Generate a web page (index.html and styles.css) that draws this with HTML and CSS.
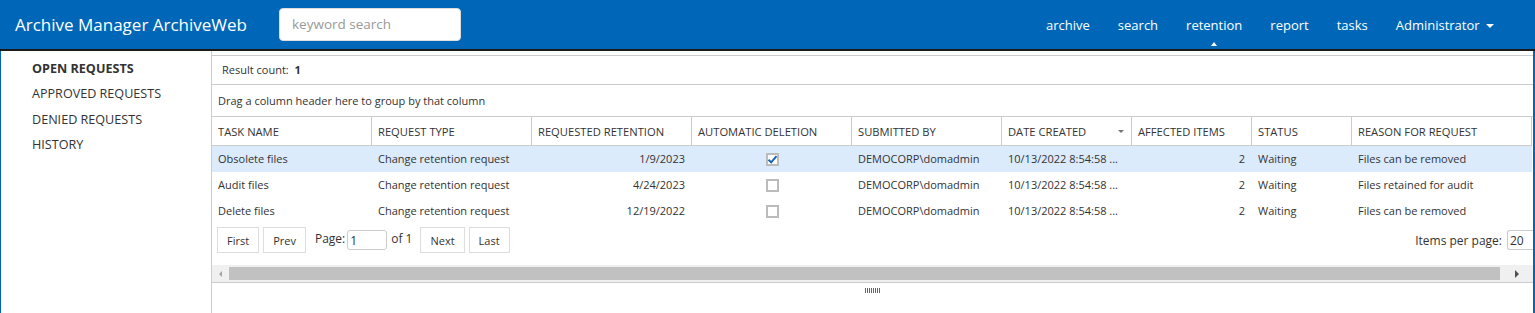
FILE: index.html
```html
<!DOCTYPE HTML>
<html>
<head>
  <title>Archive Manager ArchiveWeb</title>
  <meta name="viewport" content="width=device-width, initial-scale=1">
  <link rel="stylesheet" href="styles.css">
</head>
<body>

<div class="topbar">
  <div class="brand">Archive Manager ArchiveWeb</div>
  <input class="search" type="text" placeholder="keyword search">
  <div class="nav">
    <a href="#">archive</a>
    <a href="#">search</a>
    <a href="#" class="active">retention</a>
    <a href="#">report</a>
    <a href="#">tasks</a>
    <a href="#">Administrator <span class="caret"></span></a>
  </div>
</div>

<div class="page">
  <div class="side">
    <a href="#" class="current">OPEN REQUESTS</a>
    <a href="#">APPROVED REQUESTS</a>
    <a href="#">DENIED REQUESTS</a>
    <a href="#">HISTORY</a>
  </div>

  <div class="main">
    <div class="grid">
      <div class="count">Result count: <b>1</b></div>
      <div class="group">Drag a column header here to group by that column</div>
      <table class="tbl">
        <colgroup>
          <col style="width:160px"><col style="width:160px"><col style="width:160px">
          <col style="width:160px"><col style="width:150px"><col style="width:130px">
          <col style="width:120px"><col style="width:100px"><col style="width:180px">
        </colgroup>
        <tr>
          <th>TASK NAME</th>
          <th>REQUEST TYPE</th>
          <th>REQUESTED RETENTION</th>
          <th>AUTOMATIC DELETION</th>
          <th>SUBMITTED BY</th>
          <th class="sorted">DATE CREATED <span class="sort"></span></th>
          <th>AFFECTED ITEMS</th>
          <th>STATUS</th>
          <th>REASON FOR REQUEST</th>
        </tr>
        <tr class="selected">
          <td>Obsolete files</td>
          <td>Change retention request</td>
          <td class="num">1/9/2023</td>
          <td class="chk"><span class="box on"><svg width="11" height="11" viewBox="0 0 11 11"><path d="M1.5 5.8 L4.2 8.4 L9.5 2.2" fill="none" stroke="#1b62b0" stroke-width="2"/></svg></span></td>
          <td>DEMOCORP\domadmin</td>
          <td>10/13/2022 8:54:58 ...</td>
          <td class="num">2</td>
          <td>Waiting</td>
          <td>Files can be removed</td>
        </tr>
        <tr>
          <td>Audit files</td>
          <td>Change retention request</td>
          <td class="num">4/24/2023</td>
          <td class="chk"><span class="box"></span></td>
          <td>DEMOCORP\domadmin</td>
          <td>10/13/2022 8:54:58 ...</td>
          <td class="num">2</td>
          <td>Waiting</td>
          <td>Files retained for audit</td>
        </tr>
        <tr>
          <td>Delete files</td>
          <td>Change retention request</td>
          <td class="num">12/19/2022</td>
          <td class="chk"><span class="box"></span></td>
          <td>DEMOCORP\domadmin</td>
          <td>10/13/2022 8:54:58 ...</td>
          <td class="num">2</td>
          <td>Waiting</td>
          <td>Files can be removed</td>
        </tr>
      </table>

      <div class="pager">
        <button class="pbtn">First</button>
        <button class="pbtn">Prev</button>
        <span class="plabel">Page:</span>
        <input class="pinput" type="text" value="1">
        <span class="plabel">of 1</span>
        <button class="pbtn">Next</button>
        <button class="pbtn">Last</button>
        <span class="perpage">Items per page:</span>
        <input class="pinput wide" type="text" value="20">
      </div>

      <div class="hscroll">
        <span class="arrow left"></span>
        <span class="thumb"></span>
        <span class="arrow right"></span>
      </div>
    </div>
    <div class="splitter"><span class="grip"></span></div>
  </div>
</div>

</body>
</html>
```

FILE: styles.css
```css
body {
  margin: 0;
  font-family: "Open Sans", sans-serif;
  font-size: 12px;
  color: #333;
  overflow: hidden;
}

a {
  text-decoration: none;
}

/* top bar */

.topbar {
  display: flex;
  align-items: center;
  height: 49px;
  background-color: #0067b8;
  border-bottom: 2px solid #1a1a1a;
}

.brand {
  width: 279px;
  box-sizing: border-box;
  padding-left: 15px;
  color: #fff;
  font-size: 17px;
}

.search {
  width: 182px;
  height: 33px;
  box-sizing: border-box;
  margin-top: -1px;
  border: 1px solid #ddd;
  border-radius: 4px;
  padding: 0 12px;
  font-family: inherit;
  font-size: 13.5px;
  color: #555;
}

.search::placeholder {
  color: #999;
}

.nav {
  display: flex;
  margin-left: auto;
  margin-right: 27px;
}

.nav a {
  position: relative;
  padding: 0 14px;
  color: #fff;
  font-size: 13px;
}

.nav a.active::after {
  content: "";
  position: absolute;
  left: 50%;
  bottom: -12px;
  margin-left: -3px;
  border-left: 3px solid transparent;
  border-right: 3px solid transparent;
  border-bottom: 4px solid #fff;
}

.caret {
  display: inline-block;
  margin-left: 3px;
  vertical-align: middle;
  border-left: 4px solid transparent;
  border-right: 4px solid transparent;
  border-top: 4px solid #fff;
}

/* page */

.page {
  display: flex;
  height: 262px;
  border-left: 1px solid #0067b8;
  border-right: 2px solid #0067b8;
}

.side {
  width: 210px;
  flex-shrink: 0;
  border-right: 1px solid #ccc;
  padding-top: 5px;
}

.side a {
  display: block;
  padding-left: 31px;
  line-height: 25.4px;
  color: #333;
  font-size: 12.6px;
}

.side a.current {
  font-weight: bold;
}

.main {
  flex: 1;
  min-width: 0;
  padding-top: 4px;
}

.grid {
  border-top: 1px solid #ccc;
  border-bottom: 1px solid #ccc;
}

.count {
  height: 28px;
  line-height: 28px;
  padding-left: 10px;
  border-bottom: 1px solid #ccc;
  font-size: 11px;
}

.count b {
  margin-left: 3px;
}

.group {
  height: 31px;
  line-height: 31px;
  padding-left: 6px;
  border-bottom: 1px solid #ccc;
  font-size: 11px;
}

/* table */

.tbl {
  table-layout: fixed;
  border-collapse: separate;
  border-spacing: 0;
  width: 1320px;
  font-size: 11px;
}

.tbl th {
  height: 28px;
  padding: 0 6px;
  text-align: left;
  font-weight: normal;
  font-size: 11.2px;
  white-space: nowrap;
  border-right: 1px solid #ccc;
  border-bottom: 1px solid #ccc;
  color: #333;
}

.tbl th.sorted {
  position: relative;
}

.sort {
  position: absolute;
  right: 7px;
  top: 13px;
  border-left: 3px solid transparent;
  border-right: 3px solid transparent;
  border-top: 3px solid #777;
}

.tbl td {
  height: 26px;
  padding: 0 6px;
  line-height: 14px;
  white-space: nowrap;
  overflow: hidden;
}

.tbl tr.selected td {
  background-color: #dcebfc;
}

.tbl td.num {
  text-align: right;
  padding-right: 7px;
}

.tbl td.chk {
  text-align: center;
}

.box {
  display: inline-block;
  width: 13px;
  height: 13px;
  box-sizing: border-box;
  border: 2px solid #bbb;
  background-color: #fff;
  vertical-align: middle;
  position: relative;
}

.box svg {
  position: absolute;
  left: -1px;
  top: -1px;
}

/* pager */

.pager {
  display: flex;
  align-items: center;
  height: 26px;
  padding: 3px 0 12px 5px;
}

.pbtn {
  height: 26px;
  margin-right: 4px;
  padding: 0 9px;
  border: 1px solid #ddd;
  background-color: #fff;
  font-family: inherit;
  font-size: 11px;
  color: #333;
  cursor: pointer;
}

.plabel {
  margin: -3px 2px 0 5px;
}

.pinput {
  width: 40px;
  height: 20px;
  box-sizing: border-box;
  border: 1px solid #ccc;
  border-radius: 3px;
  padding: 0 2px;
  font-family: inherit;
  font-size: 12px;
  color: #333;
}

.pinput + .plabel {
  margin-left: 4px;
  margin-right: 8px;
}

.perpage {
  margin-left: auto;
  margin-right: 5px;
}

.pinput.wide {
  width: 26px;
  border-right: none;
  border-radius: 3px 0 0 3px;
}

/* scrollbar */

.hscroll {
  display: flex;
  align-items: center;
  height: 17px;
  background-color: #f0f0f0;
}

.thumb {
  flex: 1;
  height: 13px;
  background-color: #c1c1c1;
}

.arrow {
  width: 17px;
  display: flex;
  justify-content: center;
}

.arrow.left::before {
  content: "";
  border-top: 3px solid transparent;
  border-bottom: 3px solid transparent;
  border-right: 3px solid #a3a3a3;
}

.arrow.right {
  width: 33px;
}

.arrow.right::before {
  content: "";
  border-top: 4px solid transparent;
  border-bottom: 4px solid transparent;
  border-left: 4px solid #505050;
}

.splitter {
  display: flex;
  justify-content: center;
  padding-top: 5px;
}

.grip {
  width: 15px;
  height: 5px;
  background: repeating-linear-gradient(90deg, #666 0, #666 1px, transparent 1px, transparent 2px);
}
```
